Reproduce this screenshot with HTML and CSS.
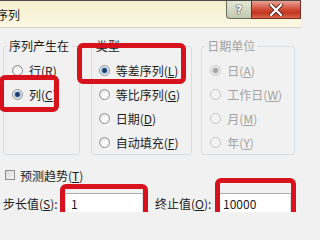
FILE: index.html
```html
<!DOCTYPE html>
<html lang="zh-CN">
<head>
<meta charset="utf-8">
<title>序列</title>
<link rel="stylesheet" href="styles.css">
</head>
<body>
<div class="window">
  <div class="titlebar">
    <span class="title">序列</span>
    <div class="caption">
      <span class="cap-btn help">?</span>
      <span class="cap-btn close">
        <svg width="16" height="12" viewBox="0 0 16 12"><path d="M3 1 L13 11 M13 1 L3 11" stroke="#5a2a22" stroke-width="4" stroke-linecap="round"/><path d="M3 1 L13 11 M13 1 L3 11" stroke="#fff" stroke-width="2.2" stroke-linecap="round"/></svg>
      </span>
    </div>
  </div>
  <div class="content">
    <div class="groups">
      <fieldset class="group g1">
        <legend>序列产生在</legend>
        <div class="opt"><span class="radio"></span><span>行(<u>R</u>)</span></div>
        <div class="opt"><span class="radio on"></span><span>列(<u>C</u>)</span></div>
      </fieldset>
      <fieldset class="group g2">
        <legend>类型</legend>
        <div class="opt"><span class="radio on"></span><span>等差序列(<u>L</u>)</span></div>
        <div class="opt"><span class="radio"></span><span>等比序列(<u>G</u>)</span></div>
        <div class="opt"><span class="radio"></span><span>日期(<u>D</u>)</span></div>
        <div class="opt"><span class="radio"></span><span>自动填充(<u>F</u>)</span></div>
      </fieldset>
      <fieldset class="group g3 disabled">
        <legend>日期单位</legend>
        <div class="opt"><span class="radio on"></span><span>日(<u>A</u>)</span></div>
        <div class="opt"><span class="radio"></span><span>工作日(<u>W</u>)</span></div>
        <div class="opt"><span class="radio"></span><span>月(<u>M</u>)</span></div>
        <div class="opt"><span class="radio"></span><span>年(<u>Y</u>)</span></div>
      </fieldset>
    </div>
    <div class="check-row"><span class="checkbox"></span><span>预测趋势(<u>T</u>)</span></div>
    <div class="fields">
      <span class="flabel l1">步长值(<u>S</u>):</span>
      <span class="input i1">1</span>
      <span class="flabel l2">终止值(<u>O</u>):</span>
      <span class="input i2">10000</span>
    </div>
  </div>
  <div class="mark m1"></div>
  <div class="mark m2"></div>
  <div class="mark m3"></div>
  <div class="mark m4"></div>
</div>
</body>
</html>
```

FILE: styles.css
```css
* { box-sizing: border-box; }
body {
  margin: 0;
  font-family: "Noto Sans CJK SC", "Noto Sans", sans-serif;
  font-size: 12px;
  color: #1b1b1b;
  background: #f1f1f1;
}
.window {
  position: relative;
  width: 301px;
  height: 212px;
  overflow: hidden;
  background: #f1f1f1;
}
.titlebar {
  height: 28px;
  display: flex;
  justify-content: space-between;
  align-items: flex-start;
  background: linear-gradient(#f5eecd, #fcf8e3);
  border-top: 1px solid #4a4a44;
  border-bottom: 1px solid #d2d2cc;
}
.title {
  margin-left: -4px;
  margin-top: 6px;
  line-height: 16px;
}
.caption {
  display: flex;
  height: 18px;
}
.cap-btn {
  display: flex;
  align-items: center;
  justify-content: center;
  height: 18px;
  border: 1px solid #6a6a5e;
  border-top: 0;
}
.help {
  width: 25px;
  border-radius: 0 0 0 4px;
  border-right: 0;
  background: linear-gradient(#e3e6d4, #c4cab0);
  color: #fff;
  font-family: "DejaVu Sans", sans-serif;
  font-weight: bold;
  font-size: 12px;
  text-shadow: 0 0 1px #333, 0 0 1px #333, 0 0 1px #333;
}
.close {
  width: 50px;
  border-color: #7a2a22;
  background: linear-gradient(#e9a292, #cf4b36 50%, #c2361f 70%, #d8674c);
}
.content {
  padding: 10px 6px 0 3px;
}
.groups {
  display: flex;
}
.group {
  margin: 0;
  padding: 4px 0 0 8px;
  border: 1px solid #d5dfe5;
  border-radius: 3px;
  min-width: 0;
  height: 117px;
}
.group legend {
  margin-left: -5px;
  padding: 0 2px;
  line-height: 16px;
}
.g1 { width: 77px; }
.g2 { width: 102px; margin-left: 11px; padding-left: 7px; }
.g3 { width: 94px; margin-left: 9px; }
.opt {
  display: flex;
  align-items: center;
  gap: 6px;
  height: 24px;
  white-space: nowrap;
}
.radio {
  width: 11px;
  height: 11px;
  border-radius: 50%;
  border: 1px solid #8e8f8f;
  background: radial-gradient(circle at 60% 65%, #ffffff 20%, #d9d9d9 100%);
  flex: none;
}
.radio.on {
  background: radial-gradient(circle, #1d3a66 0 1.6px, #4e79b5 2.4px, #b9d2ea 3.3px, #f2f2f2 4px);
}
.disabled { color: #a2a2a2; }
.disabled .radio {
  border-color: #c6c6c6;
  background: #f3f3f3;
}
.disabled .radio.on {
  background: radial-gradient(circle, #a6a6a6 0 2px, #d3d3d3 3px, #f3f3f3 4px);
}
.check-row {
  display: flex;
  align-items: center;
  gap: 5px;
  height: 16px;
  margin-top: 12px;
  margin-left: 2px;
}
.checkbox {
  width: 10px;
  height: 10px;
  border: 1px solid #8e8f8f;
  background: linear-gradient(135deg, #d8d8d8, #f7f7f7);
}
.fields {
  display: flex;
  align-items: center;
  margin-top: 10px;
  height: 22px;
}
.flabel { white-space: nowrap; line-height: 16px; }
.l1 { width: 62px; }
.l2 { width: 64px; margin-left: 12px; }
.input {
  height: 22px;
  padding: 0 4px;
  line-height: 20px;
  background: #fff;
  border: 1px solid #dbdfe6;
  border-top-color: #abadb3;
  font-size: 12px;
}
.i1 { width: 78px; padding-left: 5px; }
.i2 { width: 72px; padding-left: 3px; }
.mark {
  position: absolute;
  border: 5px solid #d8121c;
  border-radius: 6px;
}
.m1 { left: -1px; top: 75px; width: 60px; height: 37px; }
.m2 { left: 77px; top: 43px; width: 109px; height: 41px; }
.m3 { left: 60px; top: 184px; width: 88px; height: 40px; }
.m4 { left: 215px; top: 178px; width: 81px; height: 45px; }
```
